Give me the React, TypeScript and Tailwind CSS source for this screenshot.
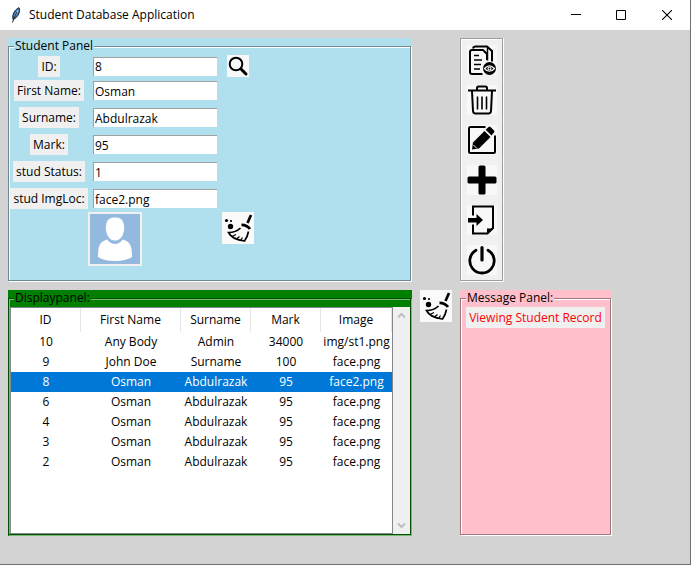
import type { ReactNode } from "react";

const fields = [
  { id: "sid", label: "ID:", value: "8" },
  { id: "first", label: "First Name:", value: "Osman" },
  { id: "surname", label: "Surname:", value: "Abdulrazak" },
  { id: "mark", label: "Mark:", value: "95" },
  { id: "status", label: "stud Status:", value: "1" },
  { id: "img", label: "stud ImgLoc:", value: "face2.png" },
];

const records = [
  ["10", "Any Body", "Admin", "34000", "img/st1.png"],
  ["9", "John Doe", "Surname", "100", "face.png"],
  ["8", "Osman", "Abdulrazak", "95", "face2.png"],
  ["6", "Osman", "Abdulrazak", "95", "face.png"],
  ["4", "Osman", "Abdulrazak", "95", "face.png"],
  ["3", "Osman", "Abdulrazak", "95", "face.png"],
  ["2", "Osman", "Abdulrazak", "95", "face.png"],
];

function Feather() {
  return (
    <svg width="16" height="16" viewBox="0 0 16 16" aria-hidden="true">
      <path d="M5 12.5 C4 8 6 3 11 0.7 C12.500 4 10.500 9.500 6.500 11.800 Z" fill="#3d78b4" stroke="#16222e" strokeWidth="1" />
      <path d="M7 9 L10 3.500" stroke="#a9d3f5" strokeWidth="1.500" />
      <path d="M4.500 15.500 L6 11 L9 5" fill="none" stroke="#222" strokeWidth="1" />
    </svg>
  );
}

function Broom() {
  return (
    <svg width="32" height="32" viewBox="0 0 32 32" fill="none" stroke="#000" aria-hidden="true">
      <path d="M29 3 L25.5 11" strokeWidth="2.6" />
      <path d="M19.5 12.8 Q25 12.8 28 17" strokeWidth="2.8" />
      <path d="M18.5 16 Q14 20.5 6.5 20.5 Q10 27.500 22.5 29 Q25.5 25 26.5 19.5" strokeWidth="1.7" />
      <path d="M10 24.500 L14 22.500 M14.500 27 L17.500 24.500 M18.500 28.5 L20.500 25.5" strokeWidth="1.2" />
      <g fill="#000" stroke="none">
        <circle cx="4.5" cy="8.5" r="1.6" />
        <circle cx="9" cy="9" r="1.1" />
        <circle cx="8.5" cy="14.5" r="2.7" />
      </g>
    </svg>
  );
}

function Tool({ label, children }: { label: string; children: ReactNode }) {
  return (
    <button aria-label={label} className="size-[30px] bg-[#f8f8f8]">
      <svg width="30" height="30" viewBox="0 0 30 30" fill="none" stroke="#000" strokeWidth="2" aria-hidden="true">
        {children}
      </svg>
    </button>
  );
}

export default function App() {
  return (
    <div className="flex min-h-screen flex-col border-r border-b border-[#707070] bg-[#d3d3d3] font-['Open_Sans','Noto_Sans',sans-serif] text-xs leading-4 text-black">
      <header className="flex h-[30px] items-center bg-white pl-2">
        <Feather />
        <h1 className="ml-[5px] flex-1">Student Database Application</h1>
        <button aria-label="Minimize" className="flex h-full w-[45px] items-center justify-center">
          <svg width="10" height="10" viewBox="0 0 10 10" stroke="#000"><path d="M0 4.500H10" /></svg>
        </button>
        <button aria-label="Maximize" className="flex h-full w-[46px] items-center justify-center">
          <svg width="10" height="10" viewBox="0 0 10 10" fill="none" stroke="#000"><path d="M.5 .5H9.5V9.5H.5Z" /></svg>
        </button>
        <button aria-label="Close" className="flex h-full w-[46px] items-center justify-center">
          <svg width="10" height="10" viewBox="0 0 10 10" stroke="#000" strokeWidth="1.1"><path d="M0 0L10 10M10 0L0 10" /></svg>
        </button>
      </header>

      <main className="grid grid-cols-[minmax(0,404fr)_32px_minmax(0,152fr)] gap-2 pt-2 pr-[78px] pl-2">
        <section className="bg-[#b0dfed]">
          <fieldset className="mr-px mb-px min-h-[243px] min-w-0 border border-[#6d8a94] p-px pt-0 shadow-[1px_1px_0_#fff,inset_1px_1px_0_#fff]">
            <legend className="ml-1 h-[17px] bg-[#b0dfed] px-px">Student Panel</legend>
            <form className="grid grid-cols-[78px_134px_32px] grid-rows-[22px_repeat(5,27px)_54px] items-center">
              {fields.map((f, i) => (
                <div key={f.id} className="contents">
                  <label htmlFor={f.id} className="col-start-1 justify-self-center bg-[#f0f0f0] px-[3px] py-[2px] leading-[17px] whitespace-nowrap">
                    {f.label}
                  </label>
                  <input
                    id={f.id}
                    defaultValue={f.value}
                    className="mx-[5px] h-[19px] w-[124px] border-t border-l border-[#a0a0a0] bg-white pl-px outline-none"
                  />
                  {i === 0 && (
                    <button type="button" aria-label="Search" className="size-[22px] justify-self-center bg-[#f8f8f8]">
                      <svg width="22" height="22" viewBox="0 0 22 22" fill="none" stroke="#000">
                        <circle cx="9" cy="9" r="6.3" strokeWidth="2" />
                        <path d="M13.5 13.5L15 15" strokeWidth="2" />
                        <path d="M14.5 14.5L19 19" strokeWidth="3" strokeLinecap="round" />
                      </svg>
                    </button>
                  )}
                </div>
              ))}
              <svg className="col-start-2 bg-[#f0f0f0]" width="54" height="54" viewBox="0 0 54 54" role="img" aria-label="Student photo">
                <rect x="2" y="2" width="50" height="50" fill="#94b9df" />
                <path d="M10 45 C10 33 12 30 19 27.5 Q23 32 27 32 Q31 32 35 27.5 C42 30 44 33 44 45 Q38 49 27 49 Q16 49 10 45Z" fill="#fff" />
                <path d="M27 5 C34 5 36.5 9.500 36.500 16 C36.500 23 32.500 29 27 29 C21.500 29 17.500 23 17.500 16 C17.500 9.500 20 5 27 5Z" fill="#fff" stroke="#94b9df" strokeWidth="0.800" />
              </svg>
              <button type="button" aria-label="Clear form" className="size-8 self-start bg-[#fafafa]"><Broom /></button>
            </form>
          </fieldset>
        </section>

        <nav aria-label="Record actions" className="col-start-3 justify-self-start bg-[#f0f0f0] pr-px pb-px">
          <div className="flex h-full flex-col gap-[10px] border border-[#9d9d9d] pt-[6px] pr-[5px] pb-[5px] pl-[6px] shadow-[1px_1px_0_#fff,inset_1px_1px_0_#fff]">
            <Tool label="View">
              <path d="M6 3.500Q6.500 1.500 8.500 1.500H20L25 6V16.500" />
              <path d="M20.500 1.500V15.500" strokeWidth="1.500" />
              <path d="M15.500 29H5Q3 29 3 27V7Q3 5 5 5H16L20 9V15" />
              <path d="M7 10.500H12M7 15H15M7 19.500H14M7 24H13" strokeWidth="1.600" />
              <circle cx="22.500" cy="23.500" r="6.500" fill="#000" stroke="none" />
              <path d="M17.500 23.500Q22.500 18 27.500 23.500Q22.500 29 17.500 23.500Z" stroke="#fff" strokeWidth="1.200" />
              <circle cx="22.500" cy="23.500" r="1.500" stroke="#fff" strokeWidth="1.200" />
            </Tool>
            <Tool label="Delete">
              <path d="M1 5.500H29M10 5V3Q10 1.500 11.500 1.500H18.500Q20 1.500 20 3V5" />
              <path d="M5 6L6 26Q6.200 28.500 8.500 28.500H21.500Q23.800 28.500 24 26L25 6" />
              <path d="M10.500 11.500V24.500M15 11.500V24.500M19.500 11.500V24.500" strokeWidth="1.600" />
            </Tool>
            <Tool label="Edit">
              <path d="M18.500 2H3.500Q2 2 2 3.500V26.500Q2 28 3.500 28H26.500Q28 28 28 26.500V10.500" />
              <path d="M6 17.500L17.500 6L23.500 12L12 23.500L5 24.500Z" fill="#000" stroke="none" />
              <path d="M18.700 4.800L21.500 2Q22.500 1 23.500 2L27 5.500Q28 6.500 27 7.500L24.500 10.500Z" fill="#000" stroke="none" />
              <path d="M6.500 20L10 23.500" stroke="#f8f8f8" strokeWidth="1" />
            </Tool>
            <Tool label="Add">
              <g fill="#000" stroke="none">
                <rect x="11.500" y="0.500" width="7" height="29" rx="1.500" />
                <rect x="0.500" y="11.500" width="29" height="7" rx="1.500" />
              </g>
            </Tool>
            <Tool label="Import">
              <path d="M6 10.500V1.500H26V23L20.500 28.500H6V19.500" />
              <path d="M20 29V23.500H26.500Z" fill="#000" stroke="none" />
              <path d="M1 13H9.500V9L16 15L9.500 21V17.500H1Z" fill="#000" stroke="none" />
            </Tool>
            <Tool label="Exit">
              <path d="M9 5.200A12.200 12.200 0 1 0 21 5.200" strokeWidth="2.800" strokeLinecap="round" />
              <path d="M15 2.500V15" strokeWidth="3.200" strokeLinecap="round" />
            </Tool>
          </div>
        </nav>

        <section className="bg-[#008000]">
          <fieldset className="mr-px mb-px flex min-h-[245px] min-w-0 flex-col border border-[#005000] pl-px shadow-[1px_1px_0_#79b879,inset_1px_1px_0_#79b879]">
            <legend className="ml-1 h-[17px] bg-[#008000] px-px">Displaypanel:</legend>
            <div className="flex min-h-[227px] items-stretch">
              <div className="min-w-0 flex-1 border border-[#828790] bg-white">
                <table className="w-full table-fixed border-separate border-spacing-0 text-center">
                  <thead>
                    <tr className="h-6">
                      <th className="w-[70px] border-r border-[#e5e5e5] p-0 font-normal">ID</th>
                      <th className="w-[100px] border-r border-[#e5e5e5] p-0 font-normal">First Name</th>
                      <th className="w-[70px] border-r border-[#e5e5e5] p-0 font-normal">Surname</th>
                      <th className="w-[70px] border-r border-[#e5e5e5] p-0 font-normal">Mark</th>
                      <th className="border-r border-[#e5e5e5] p-0 font-normal">Image</th>
                    </tr>
                  </thead>
                  <tbody>
                    {records.map((r) => (
                      <tr key={r[0]} className={r[0] === "8" ? "h-5 bg-[#0078d7] text-white" : "h-5"}>
                        {r.map((c, i) => (
                          <td key={i} className="overflow-hidden px-px py-0 whitespace-nowrap">{c}</td>
                        ))}
                      </tr>
                    ))}
                  </tbody>
                </table>
              </div>
              <div className="flex w-[17px] flex-col justify-between bg-[#f0f0f0]">
                <button aria-label="Scroll up" className="flex h-[17px] items-center justify-center">
                  <svg width="9" height="7" viewBox="0 0 9 7" fill="none" stroke="#bfbfbf" strokeWidth="2"><path d="M1 5.500L4.500 2L8 5.500" /></svg>
                </button>
                <button aria-label="Scroll down" className="flex h-[17px] items-center justify-center">
                  <svg width="9" height="7" viewBox="0 0 9 7" fill="none" stroke="#bfbfbf" strokeWidth="2"><path d="M1 1.500L4.500 5L8 1.500" /></svg>
                </button>
              </div>
            </div>
          </fieldset>
        </section>

        <button aria-label="Clear display" className="size-8 self-start bg-[#fafafa]"><Broom /></button>

        <section className="bg-[#ffc0cb]">
          <fieldset className="mr-px mb-px min-h-[245px] min-w-0 border border-[#9c7780] px-1 shadow-[1px_1px_0_#fff,inset_1px_1px_0_#fff]">
            <legend className="ml-px h-[17px] bg-[#ffc0cb] px-px">Message Panel:</legend>
            <output className="mx-auto block w-fit bg-[#f0f0f0] px-[3px] py-[2px] leading-[17px] whitespace-nowrap text-[#ff0000]">
              Viewing Student Record
            </output>
          </fieldset>
        </section>
      </main>
    </div>
  );
}
